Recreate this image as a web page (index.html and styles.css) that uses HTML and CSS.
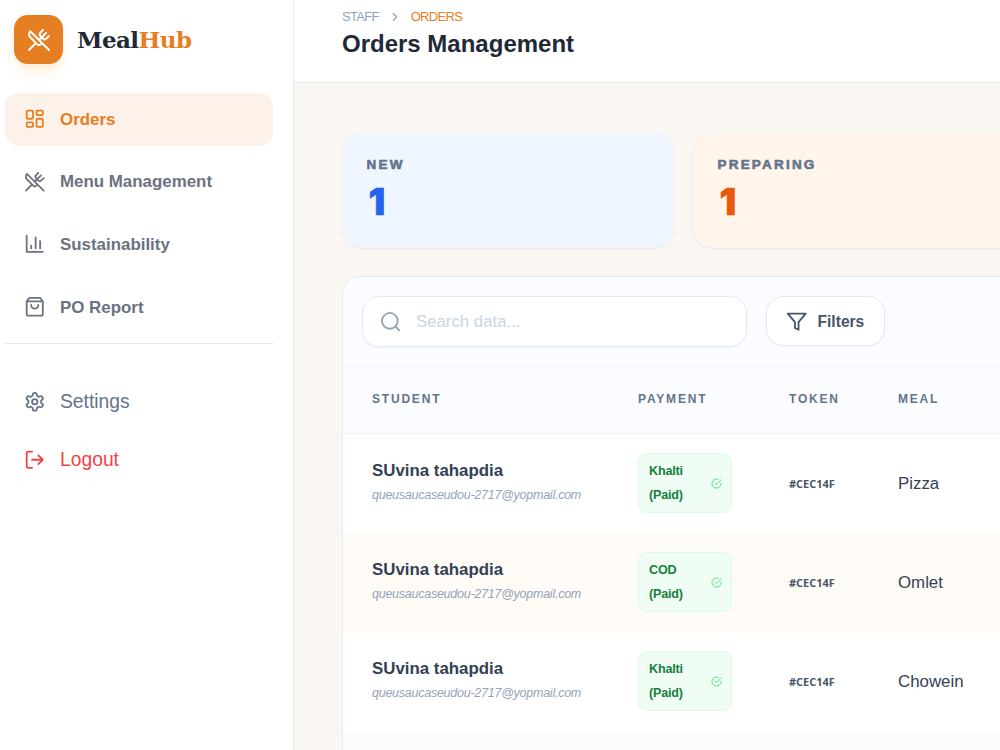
FILE: index.html
```html
<!DOCTYPE html>
<html lang="en">
<head>
<meta charset="utf-8">
<title>MealHub</title>
<link rel="stylesheet" href="styles.css">
</head>
<body>
<svg class="defs" width="0" height="0">
  <symbol id="utensils" viewBox="0 0 24 24"><path d="m16 2-2.3 2.3a3 3 0 0 0 0 4.2l1.8 1.8a3 3 0 0 0 4.2 0L22 8M15 15 3.3 3.3a4.2 4.2 0 0 0 0 6l7.3 7.3c.7.7 2 .7 2.8 0L15 15Zm0 0 7 7M2.1 21.8l6.4-6.3M19 5l-7 7"/></symbol>
  <symbol id="check" viewBox="0 0 24 24"><path d="M22 11.08V12a10 10 0 1 1-5.93-9.14M9 11l3 3L22 4"/></symbol>
</svg>
<div class="app">
  <aside class="sidebar">
    <div class="brand">
      <div class="logo"><svg class="icon"><use href="#utensils"/></svg></div>
      <div class="brand-name">Meal<span>Hub</span></div>
    </div>
    <nav class="nav">
      <a class="nav-item active"><svg class="icon" viewBox="0 0 24 24"><rect x="3" y="3" width="7" height="9" rx="1"/><rect x="14" y="3" width="7" height="5" rx="1"/><rect x="14" y="12" width="7" height="9" rx="1"/><rect x="3" y="16" width="7" height="5" rx="1"/></svg>Orders</a>
      <a class="nav-item"><svg class="icon"><use href="#utensils"/></svg>Menu Management</a>
      <a class="nav-item"><svg class="icon" viewBox="0 0 24 24"><path d="M3 3v18h18M18 17V9M13 17V5M8 17v-3"/></svg>Sustainability</a>
      <a class="nav-item"><svg class="icon" viewBox="0 0 24 24"><path d="M6 2 3 6v14a2 2 0 0 0 2 2h14a2 2 0 0 0 2-2V6l-3-4ZM3 6h18M16 10a4 4 0 0 1-8 0"/></svg>PO Report</a>
    </nav>
    <div class="account">
      <a class="account-item"><svg class="icon" viewBox="0 0 24 24"><path d="M12.22 2h-.44a2 2 0 0 0-2 2v.18a2 2 0 0 1-1 1.73l-.43.25a2 2 0 0 1-2 0l-.15-.08a2 2 0 0 0-2.73.73l-.22.38a2 2 0 0 0 .73 2.73l.15.1a2 2 0 0 1 1 1.72v.51a2 2 0 0 1-1 1.74l-.15.09a2 2 0 0 0-.73 2.73l.22.38a2 2 0 0 0 2.73.73l.15-.08a2 2 0 0 1 2 0l.43.25a2 2 0 0 1 1 1.73V20a2 2 0 0 0 2 2h.44a2 2 0 0 0 2-2v-.18a2 2 0 0 1 1-1.73l.43-.25a2 2 0 0 1 2 0l.15.08a2 2 0 0 0 2.73-.73l.22-.39a2 2 0 0 0-.73-2.73l-.15-.08a2 2 0 0 1-1-1.74v-.5a2 2 0 0 1 1-1.74l.15-.09a2 2 0 0 0 .73-2.73l-.22-.38a2 2 0 0 0-2.73-.73l-.15.08a2 2 0 0 1-2 0l-.43-.25a2 2 0 0 1-1-1.73V4a2 2 0 0 0-2-2z"/><circle cx="12" cy="12" r="3"/></svg>Settings</a>
      <a class="account-item logout"><svg class="icon" viewBox="0 0 24 24"><path d="M9 21H5a2 2 0 0 1-2-2V5a2 2 0 0 1 2-2h4M16 17l5-5-5-5M21 12H9"/></svg>Logout</a>
    </div>
  </aside>
  <main class="main">
    <header class="header">
      <div class="crumbs"><span>STAFF</span><svg class="icon" viewBox="0 0 24 24"><path d="m9 18 6-6-6-6"/></svg><span class="current">ORDERS</span></div>
      <h1 class="title">Orders Management</h1>
    </header>
    <section class="stats">
      <div class="stat new"><div class="stat-label">NEW</div><div class="stat-value">1</div></div>
      <div class="stat preparing"><div class="stat-label">PREPARING</div><div class="stat-value">1</div></div>
    </section>
    <section class="panel">
      <div class="toolbar">
        <div class="search"><svg class="icon" viewBox="0 0 24 24"><circle cx="11" cy="11" r="8.8"/><path d="m21.5 21.5-4.2-4.2"/></svg><span>Search data...</span></div>
        <button class="filters"><svg class="icon" viewBox="0 0 24 24"><path d="M22 3H2l8 9.46V19l4 2v-8.54L22 3Z"/></svg>Filters</button>
      </div>
      <div class="row head"><div>STUDENT</div><div>PAYMENT</div><div>TOKEN</div><div>MEAL</div></div>
      <div class="row first">
        <div><div class="name">SUvina tahapdia</div><div class="email">queusaucaseudou-2717@yopmail.com</div></div>
        <div class="badge"><span>Khalti<br>(Paid)</span><svg class="icon"><use href="#check"/></svg></div>
        <div class="token">#CEC14F</div><div class="meal">Pizza</div>
      </div>
      <div class="row tinted">
        <div><div class="name">SUvina tahapdia</div><div class="email">queusaucaseudou-2717@yopmail.com</div></div>
        <div class="badge"><span>COD<br>(Paid)</span><svg class="icon"><use href="#check"/></svg></div>
        <div class="token">#CEC14F</div><div class="meal">Omlet</div>
      </div>
      <div class="row">
        <div><div class="name">SUvina tahapdia</div><div class="email">queusaucaseudou-2717@yopmail.com</div></div>
        <div class="badge"><span>Khalti<br>(Paid)</span><svg class="icon"><use href="#check"/></svg></div>
        <div class="token">#CEC14F</div><div class="meal">Chowein</div>
      </div>
      <div class="row next"></div>
    </section>
  </main>
</div>
</body>
</html>
```
FILE: styles.css
```css
* { box-sizing: border-box; }
body {
  margin: 0;
  height: 750px;
  overflow: hidden;
  font-family: "Liberation Sans", Arial, sans-serif;
  background: #faf7f2;
}
.defs { position: absolute; }
.icon {
  width: 21.5px;
  height: 21.5px;
  flex: none;
  fill: none;
  stroke: currentColor;
  stroke-width: 2;
  stroke-linecap: round;
  stroke-linejoin: round;
}
.app { display: flex; width: 1000px; height: 750px; overflow: hidden; }

.sidebar {
  width: 293.5px;
  flex: none;
  padding: 15px 20px 0 5px;
  background: #fff;
  border-right: 1px solid #e9eaec;
}
.brand { display: flex; align-items: center; gap: 14px; padding-left: 9px; height: 49px; }
.logo {
  display: grid;
  place-items: center;
  width: 49px;
  height: 49px;
  border-radius: 14px;
  background: #e67e22;
  color: #fff;
  box-shadow: 0 10px 15px -3px #ffedd5, 0 4px 6px -4px #ffedd5;
}
.logo .icon { width: 24px; height: 24px; }
.brand-name {
  font: bold 23px/32px "DejaVu Serif", Georgia, serif;
  letter-spacing: -0.55px;
  color: #1f2937;
}
.brand-name span { color: #e67e22; }
.nav {
  display: flex;
  flex-direction: column;
  gap: 10px;
  margin-top: 29px;
  padding-bottom: 10px;
  border-bottom: 1px solid #e6e8eb;
}
.nav-item {
  display: flex;
  align-items: center;
  gap: 14.5px;
  height: 52.6px;
  padding: 1px 0 0 19px;
  border-radius: 14px;
  color: #6b7280;
  font-size: 16.9px;
  font-weight: bold;
}
.nav-item .icon { margin-top: -2px; }
.active { background: #fdf2e9; color: #e67e22; }
.account { display: flex; flex-direction: column; gap: 10px; padding-top: 34px; }
.account-item {
  display: flex;
  align-items: center;
  gap: 14.5px;
  height: 48px;
  padding-left: 19px;
  color: #64748b;
  font-size: 19.3px;
}
.account-item .icon { margin-top: -1px; }
.account-item.logout { color: #ef4444; }

.main { flex: 1; min-width: 0; }
.header {
  height: 83px;
  padding: 8px 0 0 48.5px;
  background: #fff;
  border-bottom: 1px solid #e8e9eb;
}
.crumbs {
  display: flex;
  align-items: center;
  gap: 9px;
  height: 17px;
  font-size: 13px;
  letter-spacing: -0.7px;
  color: #94a3b8;
}
.crumbs .icon { width: 14px; height: 14px; }
.current { color: #e67e22; }
.title { margin: 4px 0 0; font-size: 24px; line-height: 30px; color: #1f2937; }

.stats { display: flex; gap: 19px; padding: 49px 0 0 48px; }
.stat {
  flex: none;
  width: 332px;
  height: 116px;
  padding: 24px;
  border: 1px solid #f1f3f5;
  border-radius: 19px;
  box-shadow: 0 1px 2px rgba(0, 0, 0, 0.05);
}
.new { background: #eff6ff; color: #2563eb; }
.preparing { background: #fff5eb; color: #ea580c; }
.stat-label {
  font-size: 13.5px;
  font-weight: bold;
  line-height: 16px;
  letter-spacing: 2.2px;
  color: #64748b;
  -webkit-text-stroke: 0.6px currentColor;
}
.stat-value {
  margin-top: 9px;
  padding-left: 2px;
  font: 900 37px/40px Inter, sans-serif;
  -webkit-text-stroke: 0.6px currentColor;
}

.panel {
  width: 760px;
  height: 600px;
  margin: 28px 0 0 48px;
  overflow: hidden;
  background: #fff;
  border: 1px solid #e5ebf3;
  border-radius: 20px;
}
.toolbar {
  display: flex;
  gap: 19px;
  height: 90px;
  padding: 19px;
  background: #fafcff;
  border-bottom: 1px solid #f1f5f9;
}
.search, .filters {
  display: flex;
  align-items: center;
  height: 51px;
  background: #fff;
  border: 1px solid #e5e9f1;
  border-radius: 17px;
  box-shadow: 0 1px 2px rgba(0, 0, 0, 0.04);
}
.search { width: 385px; padding-left: 17px; gap: 15px; color: #cbd5e1; font-size: 16.8px; }
.search .icon { color: #94a3b8; }
.filters {
  width: 119px;
  height: 50px;
  padding: 1px 0 0 19.5px;
  gap: 10px;
  color: #475569;
  font: bold 15.6px "Liberation Sans", Arial, sans-serif;
}
.row {
  display: grid;
  grid-template-columns: 266px 151px 109px 1fr;
  align-items: center;
  height: 99.25px;
  padding-left: 29.5px;
}
.head {
  height: 67px;
  padding-bottom: 2px;
  background: #fafcff;
  border-bottom: 1px solid #f1f5f9;
  font-size: 12px;
  font-weight: bold;
  letter-spacing: 1.8px;
  color: #64748b;
}
.first { height: 98.6px; }
.tinted { background: #fffbf7; }
.next { background: #fcfcfd; }
.name { font-size: 16.85px; font-weight: bold; line-height: 24px; color: #334155; }
.email {
  font-size: 12.5px;
  font-style: italic;
  letter-spacing: -0.25px;
  line-height: 24px;
  color: #94a3b8;
}
.badge {
  display: flex;
  align-items: center;
  justify-content: space-between;
  width: 94px;
  height: 60px;
  padding: 0 9px 0 10px;
  border: 1px solid #dcfce7;
  border-radius: 9px;
  background: #f0fdf4;
  color: #15803d;
  font-size: 12.6px;
  font-weight: bold;
  line-height: 24px;
  letter-spacing: -0.2px;
}
.badge span { margin-top: -1px; }
.badge .icon { width: 11px; height: 11px; color: #4ade80; }
.token { padding-top: 1px; font: bold 11px "Open Sans", sans-serif; color: #475569; }
.meal { padding-top: 1px; font-size: 16.85px; color: #334155; }
```
